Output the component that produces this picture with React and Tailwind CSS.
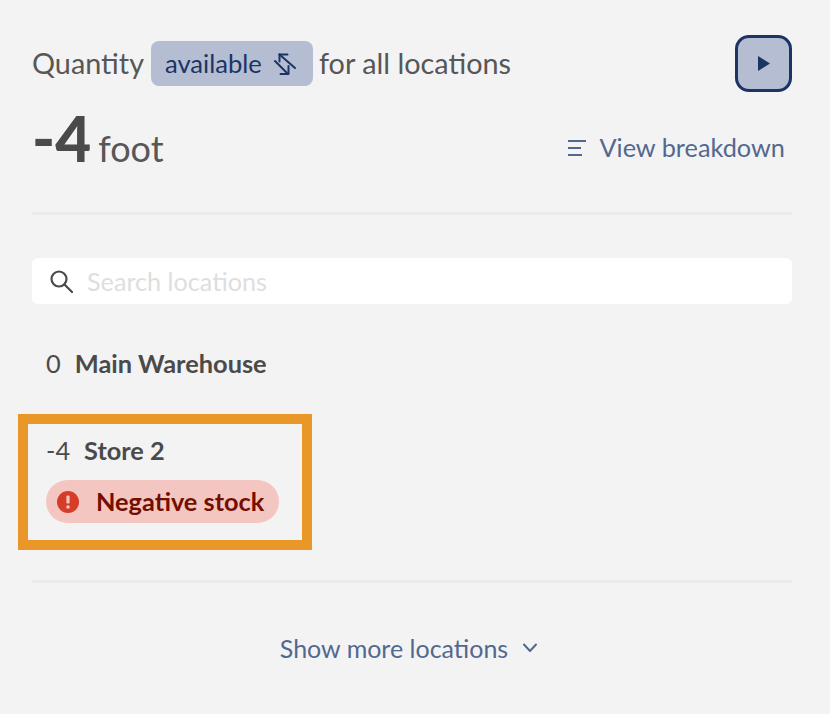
export default function App() {
  return (
    <div className="w-[830px] h-[714px] bg-[#f3f3f3] overflow-hidden pt-[35px] pl-[32px] pr-[38px] text-[#575757]" style={{ fontFamily: 'Lato, sans-serif' }}>
      <div className="flex justify-between items-start h-[57px]">
        <div className="flex items-center h-[57px] text-[28.8px] leading-none">
          <span className="pb-[1px]">Quantity</span>
          <span className="ml-[7px] h-[45px] w-[162px] rounded-[8px] bg-[#b4bdd2] text-[#1c3464] text-[25.6px] flex items-center pl-[14px] gap-[11px]">
            available
            <svg width="24" height="24" viewBox="0 0 24 24" fill="none" stroke="#1c3464" strokeWidth="2" strokeLinecap="round" strokeLinejoin="round">
              <path d="M6.5 2.5h8" />
              <path d="M6.5 2.5v7" />
              <path d="M6.5 2.5L22 16" />
              <path d="M2 9l13 13" />
              <path d="M7.5 22h8V14" />
            </svg>
          </span>
          <span className="ml-[6px] pb-[1px]">for all locations</span>
        </div>
        <button className="w-[57px] h-[57px] rounded-[14px] border-[3px] border-[#1c3464] bg-[#b4bdd2] flex items-center justify-center">
          <svg width="12" height="15" viewBox="0 0 12 15"><path d="M0 0L12 7.5L0 15Z" fill="#1c3464" /></svg>
        </button>
      </div>
      <div className="flex justify-between items-center mt-[28px] h-[56px]">
        <div className="flex items-baseline mb-[20px]">
          <span className="text-[62px] font-black leading-none text-[#4a4a4a]">-4</span>
          <span className="text-[36px] leading-none ml-[7px]">foot</span>
        </div>
        <div className="flex items-center text-[25.3px] text-[#53688f] pr-[7px]">
          <svg width="20" height="18" viewBox="0 0 20 18" className="mr-[12px]" stroke="#53688f" strokeWidth="2" fill="none">
            <path d="M1 2H19M1 9H14M1 16H15" />
          </svg>
          View breakdown
        </div>
      </div>
      <div className="h-[3px] bg-[#ebebeb] mt-[36px]"></div>
      <div className="mt-[43px] h-[46px] rounded-[6px] bg-white flex items-center pl-[17px]">
        <svg width="24" height="24" viewBox="0 0 24 24" fill="none" stroke="#4a4a4a" strokeWidth="2.2" strokeLinecap="round">
          <circle cx="10" cy="10" r="7.5" />
          <path d="M15.5 15.5L23 23" />
        </svg>
        <span className="ml-[14px] pt-[2px] text-[25.2px] text-[#dedede]">Search locations</span>
      </div>
      <div className="mt-[42px] ml-[14px] flex items-center h-[36px] text-[25.4px] leading-none text-[#4a4a4a]">
        <span>0</span>
        <span className="font-bold ml-[14px]">Main Warehouse</span>
      </div>
      <div className="mt-[32px] -ml-[14px] w-[294px] h-[136px] border-[10px] border-[#ea972a] pl-[18px] pt-[11px]">
        <div className="flex items-center h-[32px] text-[25.3px] leading-none text-[#4a4a4a]">
          <span>-4</span>
          <span className="font-bold ml-[14px]">Store 2</span>
        </div>
        <div className="mt-[13px] w-[233px] h-[43px] rounded-full bg-[#f4c6c1] flex items-center pl-[11px]">
          <svg width="22" height="22" viewBox="0 0 22 22">
            <circle cx="11" cy="11" r="11" fill="#d63d28" />
            <rect x="9.4" y="4.5" width="3.2" height="8" rx="1.2" fill="#f4c6c1" />
            <circle cx="11" cy="16" r="1.8" fill="#f4c6c1" />
          </svg>
          <span className="ml-[17px] text-[25.3px] font-bold text-[#740e00] leading-none">Negative stock</span>
        </div>
      </div>
      <div className="h-[3px] bg-[#ebebeb] mt-[30px]"></div>
      <div className="mt-[47px] pr-[6px] flex items-center justify-center text-[25px] text-[#53688f] leading-none h-[36px]">
        Show more locations
        <svg width="16" height="10" viewBox="0 0 16 10" className="ml-[14px]" fill="none" stroke="#53688f" strokeWidth="2" strokeLinecap="round" strokeLinejoin="round">
          <path d="M2 1.5L8 8L14 1.5" />
        </svg>
      </div>
    </div>
  );
}
